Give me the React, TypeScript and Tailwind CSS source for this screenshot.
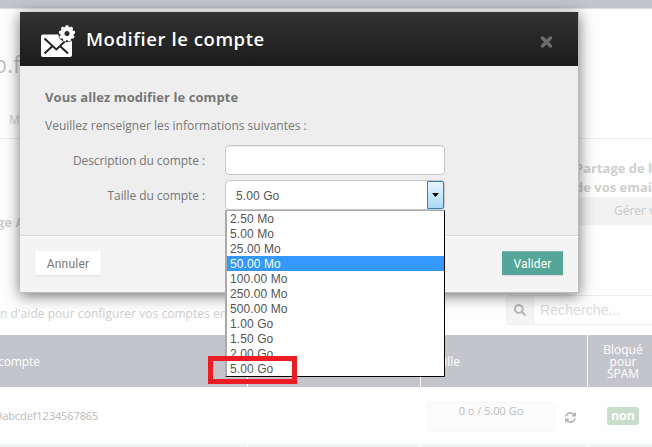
import React from "react";
import { FaSearch } from "react-icons/fa";

const sizes = [
  "2.50 Mo", "5.00 Mo", "25.00 Mo", "50.00 Mo", "100.00 Mo", "250.00 Mo",
  "500.00 Mo", "1.00 Go", "1.50 Go", "2.00 Go", "5.00 Go",
];

function MailIcon() {
  const teeth = [0, 40, 80, 120, 160, 200, 240, 280, 320];
  return (
    <svg width="36" height="34" viewBox="0 0 36 34" className="mt-[3px] shrink-0">
      <rect x="1" y="10.500" width="31" height="22.500" rx="2" fill="#fff" />
      <path d="M4.500 14.500 16.300 25.500 28 14.500M4.500 29.500l7.500-7M28 29.500l-7.500-7" fill="none" stroke="#242424" strokeWidth="2" />
      <circle cx="27" cy="9.500" r="8.800" fill="#282828" />
      <g fill="#fff">
        <circle cx="27" cy="9.500" r="6.800" />
        {teeth.map((a) => (
          <rect key={a} x="25.400" y="1.300" width="3.200" height="4" rx="0.900" transform={`rotate(${a} 27 9.500)`} />
        ))}
      </g>
      <circle cx="27" cy="9.500" r="2.500" fill="#282828" />
    </svg>
  );
}

function RefreshIcon() {
  return (
    <svg width="11" height="11" viewBox="0 0 1536 1536" fill="#b4b4b4">
      <path d="M1511 928q0 5-1 7-64 268-268 434.500T764 1536q-146 0-282.500-55T238 1324l-129 129q-19 19-45 19t-45-19-19-45V960q0-26 19-45t45-19h448q26 0 45 19t19 45-19 45l-137 137q71 66 161 102t187 36q134 0 250-65t186-179q11-17 53-117 8-23 30-23h192q13 0 22.500 9.500t9.500 22.500zm25-800v448q0 26-19 45t-45 19h-448q-26 0-45-19t-19-45 19-45l138-138Q969 256 768 256q-134 0-250 65T332 500q-11 17-53 117-8 23-30 23H50q-13 0-22.500-9.500T18 608v-7q65-268 270-434.500T768 0q146 0 284 55.500T1297 212l130-129q19-19 45-19t45 19 19 45z" />
    </svg>
  );
}

function Background() {
  return (
    <div className="flex h-[447px] w-[652px] flex-col bg-[#fefefe] text-[12px] text-[#cfcfcf]">
      <div className="h-2 shrink-0 bg-[#c4c5cb]" />
      <div className="h-px shrink-0 bg-[#dcdde0]" />
      <div className="flex h-[94px] shrink-0 items-start overflow-hidden pt-[39px]">
        <span className="-ml-[7px] text-[23px] leading-[32px] text-[#c4c4c4]">p.f</span>
      </div>
      <div className="h-[36px] shrink-0 border-b border-[#ededed] pl-[9px] pt-[8px] leading-[18px]">M</div>
      <div className="flex h-[156px] shrink-0 justify-between">
        <div className="-ml-[3px] pt-[74px] text-[13px] font-bold leading-[18px]">ge A</div>
        <div className="w-[77px] overflow-hidden whitespace-nowrap pt-[20px]">
          <div className="text-[13px] font-bold leading-[19px]">Partage de l</div>
          <div className="text-[13px] font-bold leading-[19px]">de vos emai</div>
          <div className="h-[28px] bg-[#f2f2f2] pl-[39px] leading-[28px] text-[#c8c8c8]">Gérer vos</div>
        </div>
      </div>
      <div className="flex h-[40px] shrink-0 justify-between">
        <div className="w-[240px] overflow-hidden whitespace-nowrap pt-[10px] text-[12px] leading-[18px] tracking-[0.04px]">n d'aide pour configurer vos comptes em</div>
        <div className="flex h-[30px] w-[146px] rounded-l border border-r-0 border-[#ededed]">
          <div className="flex w-[27px] items-center justify-center border-r border-[#eeeeee] bg-[#f5f5f5] text-[#b6b6b6]"><FaSearch size={12} /></div>
          <div className="pl-[6px] font-['Liberation_Sans',sans-serif] text-[14px] leading-[29px] tracking-[0.1px] text-[#dcdcdc]">Recherche...</div>
        </div>
      </div>
      <div className="flex h-[52px] shrink-0 items-center bg-[#c4c5cb] text-white">
        <div className="w-[247px] pt-px"><span className="-ml-[2px] tracking-[-0.1px]">compte</span></div>
        <div className="h-full w-[173px] border-l border-white" />
        <div className="flex h-full w-[167px] items-center border-l border-white pl-[10px] pt-px">Taille</div>
        <div className="flex h-full w-[65px] flex-col justify-center border-l border-white pl-[6px] pt-px text-center leading-[12px]">
          <span>Bloqué</span><span>pour</span><span>SPAM</span>
        </div>
      </div>
      <div className="flex h-[57px] shrink-0 items-center">
        <div className="-ml-[4px] mr-[4px] w-[427px] pt-px text-[11px] tracking-[-0.1px] text-[#bbbbbb]">9abcdef1234567865</div>
        <div className="mt-[3px] h-[30px] w-[128px] rounded border border-[#f7f7f7] bg-[#fbfbfb] text-center text-[11px] leading-[16px] text-[#bcbcbc]">0 o / 5.00 Go</div>
        <div className="ml-[10px] mt-[4px]"><RefreshIcon /></div>
        <div className="ml-[31px] mt-[1px] h-[18px] w-[32px] rounded-[3px] bg-[#c9ddca] text-center text-[12.5px] font-bold leading-[17px] text-white">non</div>
      </div>
      <div className="flex h-[3px] shrink-0 bg-[#f1f5f4]">
        <div className="w-[247px]" />
        <div className="w-[173px] border-l border-white" />
        <div className="w-[167px] border-l border-white" />
        <div className="w-[65px] border-l border-white" />
      </div>
    </div>
  );
}

function SizeSelect() {
  return (
    <div className="relative h-[30px] w-[220px]">
      <div className="flex h-[30px] justify-between rounded border border-[#c8c8c8] bg-white font-['Liberation_Sans',sans-serif] text-[12px] text-[#555]">
        <span className="pl-[10px] pt-px leading-[29px] tracking-[0.1px]">5.00 Go</span>
        <span className="flex w-[17px] items-center justify-center rounded-r-[2px] border border-[#3c7fb1] bg-linear-to-b from-[#eaf6fd] to-[#a7d9f5]">
          <svg width="7" height="4" viewBox="0 0 7 4"><path d="M0 0h7L3.500 4z" fill="#000" /></svg>
        </span>
      </div>
      <div className="absolute left-0 top-[30px] z-10 h-[167px] w-[220px] border-b border-l-2 border-r border-t border-b-black border-l-[#aaa] border-r-black border-t-[#aaa] bg-white font-['Liberation_Sans',sans-serif] text-[12px] leading-[17px] tracking-[0.1px] text-[#555]">
        {sizes.map((size) => (
          <div key={size} className={size === "50.00 Mo" ? "h-[15px] bg-[#3399ff] pl-[3px] text-white" : "h-[15px] pl-[3px]"}>{size}</div>
        ))}
      </div>
    </div>
  );
}

function Modal() {
  return (
    <div className="absolute left-[20px] top-[12px] flex h-[281px] w-[559px] flex-col border-b border-r border-[#bcbcbc] bg-[#eee] text-[12px] text-[#777] shadow-[0_3px_14px_rgba(0,0,0,0.55)]">
      <header className="flex h-[54px] shrink-0 items-center bg-linear-to-b from-[#333] to-[#1b1b1b] pl-[20px] pr-[25px] text-white">
        <MailIcon />
        <h1 className="ml-[10px] text-[18.5px] font-semibold leading-[24px] tracking-[0.57px]">Modifier le compte</h1>
        <svg className="ml-auto mt-[5px]" width="13" height="12" viewBox="0 0 13 12"><path d="M2.500 2l8 8m0-8l-8 8" stroke="#6c6c6c" strokeWidth="3.400" strokeLinecap="round" /></svg>
      </header>
      <div className="h-[169px] shrink-0">
        <h2 className="pl-[25px] pt-[21px] text-[13px] font-bold leading-[20px] tracking-[0.07px]">Vous allez modifier le compte</h2>
        <p className="pl-[25px] pt-[9px] leading-[20px]">Veuillez renseigner les informations suivantes :</p>
        <div className="mt-[9px] flex flex-col gap-[5px]">
          <div className="flex h-[30px]">
            <label className="w-[185px] text-right leading-[31px] tracking-[-0.07px]">Description du compte :</label>
            <div className="ml-[20px] h-[30px] w-[220px] rounded border border-[#c8c8c8] bg-white shadow-[inset_0_1px_1px_rgba(0,0,0,0.07)]" />
          </div>
          <div className="flex h-[30px]">
            <label className="mr-[20px] w-[185px] text-right leading-[31px] tracking-[-0.07px]">Taille du compte :</label>
            <SizeSelect />
          </div>
        </div>
      </div>
      <footer className="flex grow items-start justify-between border-t border-[#d7d7d7] bg-[#f4f4f4] px-[15px] pt-[15px] font-[Roboto,sans-serif] text-[12px] shadow-[inset_0_1px_0_#fff]">
        <button className="h-[24px] w-[66px] bg-white pt-px tracking-[0.2px] shadow-[0_1px_2px_rgba(0,0,0,0.1)]">Annuler</button>
        <button className="h-[24px] w-[61px] border-t border-[#76b8ad] bg-[#55a698] tracking-[0.15px] text-white shadow-[0_1px_2px_rgba(0,0,0,0.1)]">Valider</button>
      </footer>
    </div>
  );
}

export default function App() {
  return (
    <div className="relative h-[447px] w-[652px] overflow-hidden font-['Open_Sans',sans-serif]">
      <Background />
      <Modal />
      <div className="absolute left-[208px] top-[356px] z-20 h-[28px] w-[89px] border-[5px] border-[#ed1c24]" />
    </div>
  );
}
